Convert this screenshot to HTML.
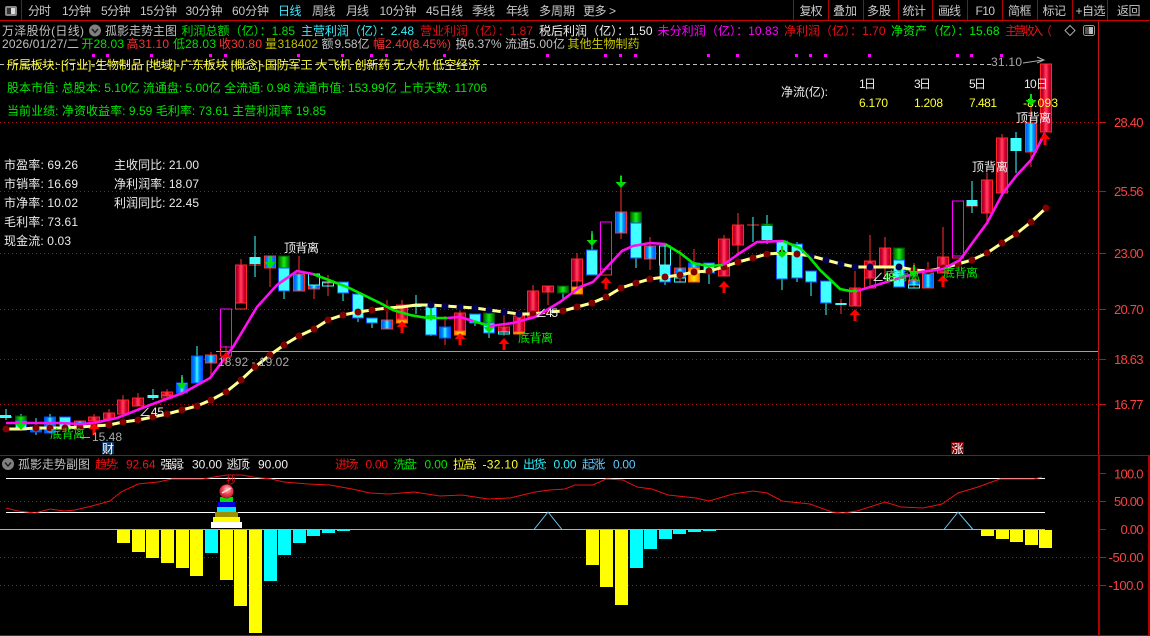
<!DOCTYPE html>
<html><head><meta charset="utf-8"><title>万泽股份</title>
<style>
html,body{margin:0;padding:0;background:#000;width:1150px;height:636px;overflow:hidden}
svg{display:block;position:absolute;left:0;top:0}
text{font-family:"Liberation Sans","WenQuanYi Zen Hei","Noto Sans CJK SC",sans-serif;font-size:12px;white-space:pre}
.cs{shape-rendering:crispEdges}
g.k rect{width:11px}
.r{fill:url(#gr);stroke:#ff2828}
.h{fill:none;stroke:#ff3030}
.m{fill:none;stroke:#ff00ff}
.bb{fill:url(#gb);stroke:#0050ff}
.b{fill:url(#gb);stroke:#ff3030}
.c{fill:#40ffff;stroke:#1050ff}
.cy{fill:#40ffff}
.hc{fill:none;stroke:#40ffff}
.g{fill:url(#gg);stroke:#005000}
.o{fill:url(#go);stroke:#ff6000}
.grid{stroke:#b01010;stroke-dasharray:1 3;fill:none}
.tb{fill:#c8c8c8}
.ax{fill:#ff4040}
.ax text{font-size:13px}
</style></head><body>
<svg width="1150" height="636" viewBox="0 0 1150 636" xmlns="http://www.w3.org/2000/svg">
<defs>
<linearGradient id="gr"><stop offset="0" stop-color="#900020"/><stop offset=".25" stop-color="#d80030"/><stop offset=".45" stop-color="#ff3858"/><stop offset=".55" stop-color="#ff3858"/><stop offset=".75" stop-color="#d80030"/><stop offset="1" stop-color="#900020"/></linearGradient>
<linearGradient id="gb"><stop offset="0" stop-color="#0050ff"/><stop offset=".3" stop-color="#0090ff"/><stop offset=".5" stop-color="#40f8ff"/><stop offset=".7" stop-color="#0090ff"/><stop offset="1" stop-color="#0050ff"/></linearGradient>
<linearGradient id="gg"><stop offset="0" stop-color="#006000"/><stop offset=".5" stop-color="#10f010"/><stop offset="1" stop-color="#006000"/></linearGradient>
<linearGradient id="go"><stop offset="0" stop-color="#ff8000"/><stop offset=".5" stop-color="#ffe000"/><stop offset="1" stop-color="#ff8000"/></linearGradient>
<radialGradient id="ball" cx=".55" cy=".35" r=".7"><stop offset="0" stop-color="#ffd0d0"/><stop offset=".5" stop-color="#f04050"/><stop offset="1" stop-color="#a01020"/></radialGradient>
<path id="au" d="M0 0L5.500 6H1.500V12H-1.500V6H-5.500Z" fill="#ff0000"/>
<path id="ad" d="M0 0L-5.500-6H-1V-12H1V-6H5.500Z" fill="#00e000"/>
</defs>

<!-- frame -->
<g class="cs" fill="none">
<path d="M0 20.500H1150" stroke="#cc0000"/>
<path d="M21.500 0V20M793.500 0V20M828.500 0V20M863.500 0V20M898.500 0V20M932.500 0V20M967.500 0V20M1002.500 0V20M1037.500 0V20M1072.500 0V20M1107.500 0V20" stroke="#b00000"/>
<path d="M1098.500 20V455" stroke="#c01010"/>
<path d="M1099 455V636M1149 455V636" stroke="#b00000" stroke-width="2"/>
<path d="M0 455.500H1150M0 635.500H1150" stroke="#b00000"/>
</g>
<rect x="5" y="6" width="12" height="10" rx="2" fill="#888"/><rect x="11" y="8" width="4" height="6" fill="#ddd"/><rect x="7" y="8" width="4" height="6" fill="#333"/>

<!-- toolbar -->
<g class="tb">
<text x="28" y="15" textLength="23">分时</text>
<text x="62" y="15" textLength="29">1分钟</text>
<text x="101" y="15" textLength="29.500">5分钟</text>
<text x="140" y="15" textLength="37">15分钟</text>
<text x="185.500" y="15" textLength="37">30分钟</text>
<text x="232" y="15" textLength="37">60分钟</text>
<text x="278" y="15" textLength="23.500" fill="#40e8ff">日线</text>
<text x="312" y="15" textLength="23.500">周线</text>
<text x="346" y="15" textLength="23">月线</text>
<text x="379.500" y="15" textLength="37">10分钟</text>
<text x="426" y="15" textLength="37">45日线</text>
<text x="472" y="15" textLength="23">季线</text>
<text x="506" y="15" textLength="23">年线</text>
<text x="539" y="15" textLength="36">多周期</text>
<text x="583" y="15" textLength="33">更多 &gt;</text>
<text x="799.500" y="15" textLength="23">复权</text>
<text x="833" y="15" textLength="24">叠加</text>
<text x="867" y="15" textLength="24">多股</text>
<text x="902.500" y="15" textLength="23.500">统计</text>
<text x="938" y="15" textLength="23">画线</text>
<text x="975.500" y="15" textLength="19.500">F10</text>
<text x="1008" y="15" textLength="23.500">简框</text>
<text x="1042.500" y="15" textLength="23.500">标记</text>
<text x="1075.500" y="15" textLength="30">+自选</text>
<text x="1117" y="15" textLength="23.500">返回</text>
</g>

<!-- header line 2 -->
<text x="2" y="35" textLength="82" fill="#c0c0c0">万泽股份(日线)</text>
<circle cx="95" cy="30.500" r="6" fill="#808080"/><path d="M92 29L95 32.500 98 29" fill="none" stroke="#222" stroke-width="1.500"/>
<text x="105" y="35" textLength="72" fill="#c0c0c0">孤影走势主图</text>
<text x="181.500" y="35" textLength="113.500" fill="#00e000">利润总额（亿）：1.85</text>
<text x="301" y="35" textLength="113" fill="#30f0ff">主营利润（亿）：2.48</text>
<text x="420" y="35" textLength="113" fill="#e01010">营业利润（亿）：1.87</text>
<text x="539" y="35" textLength="113.500" fill="#f0f0f0">税后利润（亿）：1.50</text>
<text x="657.500" y="35" textLength="121" fill="#ff00ff">未分利润（亿）：10.83</text>
<text x="784" y="35" textLength="101.500" fill="#f01010">净利润（亿）：1.70</text>
<text x="891" y="35" textLength="108.500" fill="#00f000">净资产（亿）：15.68</text>
<text x="1005" y="35" textLength="47" fill="#f01010">主营收入（</text>
<path d="M1070 25.500L1075 30.500 1070 35.500 1065 30.500Z" fill="none" stroke="#aaa"/>
<rect x="1083.500" y="25.500" width="11" height="10" rx="2" fill="none" stroke="#999"/><rect x="1089" y="27" width="4" height="7" fill="#bbb"/><rect x="1085" y="27" width="4" height="7" fill="#555"/>

<!-- header line 3 -->
<text x="2" y="48" textLength="77" fill="#c0c0c0">2026/01/27/二</text>
<text x="81.500" y="48" textLength="10.500" fill="#00e000">开</text><text x="93.500" y="48" textLength="30.500" fill="#00e000">28.03</text>
<text x="126.500" y="48" textLength="10.500" fill="#ff3030">高</text><text x="138.500" y="48" textLength="30.500" fill="#ff3030">31.10</text>
<text x="173" y="48" textLength="10.500" fill="#00e000">低</text><text x="185" y="48" textLength="31" fill="#00e000">28.03</text>
<text x="219" y="48" textLength="10.500" fill="#ff3030">收</text><text x="231" y="48" textLength="31" fill="#ff3030">30.80</text>
<text x="265" y="48" textLength="10.500" fill="#c0c000">量</text><text x="277.500" y="48" textLength="40.500" fill="#c0c000">318402</text>
<text x="321.500" y="48" textLength="10.500" fill="#c0c0c0">额</text><text x="334.500" y="48" textLength="35" fill="#c0c0c0">9.58亿</text>
<text x="373" y="48" textLength="10.500" fill="#ff3030">幅</text><text x="385" y="48" textLength="66" fill="#ff3030">2.40(8.45%)</text>
<text x="455.500" y="48" textLength="10.500" fill="#c0c0c0">换</text><text x="467.500" y="48" textLength="34" fill="#c0c0c0">6.37%</text>
<text x="505" y="48" textLength="24" fill="#c0c0c0">流通</text><text x="529" y="48" textLength="36" fill="#c0c0c0">5.00亿</text>
<text x="567.500" y="48" textLength="72" fill="#c8c800">其他生物制药</text>

<!-- magenta dots -->
<g fill="#ff00ff" class="cs"><rect x="92" y="54" width="3" height="3"/><rect x="106" y="54" width="3" height="3"/><rect x="150" y="54" width="3" height="3"/><rect x="209" y="54" width="3" height="3"/><rect x="224" y="54" width="3" height="3"/><rect x="297" y="54" width="3" height="3"/><rect x="341" y="54" width="3" height="3"/><rect x="370" y="54" width="3" height="3"/><rect x="385" y="54" width="3" height="3"/><rect x="443" y="54" width="3" height="3"/><rect x="546" y="54" width="3" height="3"/><rect x="604" y="54" width="3" height="3"/><rect x="619" y="54" width="3" height="3"/><rect x="634" y="54" width="3" height="3"/><rect x="707" y="54" width="3" height="3"/><rect x="736" y="54" width="3" height="3"/><rect x="795" y="54" width="3" height="3"/><rect x="809" y="54" width="3" height="3"/><rect x="824" y="54" width="3" height="3"/><rect x="868" y="54" width="3" height="3"/><rect x="956" y="54" width="3" height="3"/><rect x="970" y="54" width="3" height="3"/><rect x="1000" y="54" width="3" height="3"/></g>

<!-- grid -->
<g class="cs">
<path class="grid" d="M0 122.500H1098M0 191.500H1098M0 253.500H1098M0 309.500H1098M0 359.500H1098M0 404.500H1098M0 501.500H1098M0 557.500H1098M0 585.500H1098"/>
<path d="M0 64.500H991" stroke="#c0c0c0" stroke-dasharray="4 3" fill="none"/>
<path d="M216 351.500H1098" stroke="#a0a0a0" fill="none"/>
</g>
<path d="M1023 63L1043 60M1037 57L1044 60 1037 63" fill="none" stroke="#aaa"/>

<!-- wicks -->
<g class="cs" fill="none" stroke="#ff3030">
<path d="M94 414V424M109 409V419M123 395V414M138 393V406M167 389V400M211 352V377M226 346V356M241 259V303M249 265H261M270 256V287M299 256V291M314 285V299M328 275V296M322 283H334M387 300V329M402 300V323M445 316V345M460 310V335M504 308V336M519 310V334M533 285V317M548 286V305M577 253V294M621 175V239M650 237V270M680 250V282M694 249V282M724 235V276M738 213V256M747 225H759M841 299V314M835 304H847M855 271V306M870 235V288M885 237V280M914 263V288M928 262V288M943 227V273M987 173V223M1002 134V196M1031 100V167M966 206H978"/>
</g>
<g class="cs" fill="none" stroke="#40ffff">
<path d="M6 409V420M0 417H12M21 414V430M36 418V435M30 429H42M50 414V433M153 389V400M182 375V393M197 346V383M255 236V277M284 256V299M343 282V301M358 294V322M372 318V328M416 295V314M431 307V336M475 314V326M489 323V338M563 286V301M557 292H569M592 231V275M636 223V268M665 246V285M709 263V284M767 215V244M782 241V290M797 242V282M811 271V296M826 281V315M899 248V287M972 181V213M1016 132V173M753 217V242"/>
</g>

<!-- candles -->
<g class="k cs">
<rect class="g" x="15.500" y="416" height="5"/><rect class="g" x="278.500" y="256" height="12"/><rect class="g" x="483.500" y="313" height="10"/><rect class="g" x="557.500" y="286" height="7"/><rect class="g" x="630.500" y="212" height="11"/><rect class="g" x="761.500" y="224" height="2"/><rect class="g" x="893.500" y="248" height="12"/>
<rect class="r" x="117.500" y="400" height="14"/><rect class="r" x="132.500" y="398" height="8"/><rect class="r" x="527.500" y="291" height="26"/><rect class="r" x="235.500" y="265" height="38"/><rect class="r" x="571.500" y="259" height="22"/><rect class="r" x="718.500" y="239" height="37"/><rect class="r" x="732.500" y="225" height="20"/><rect class="r" x="849.500" y="288" height="18"/><rect class="r" x="864.500" y="261" height="17"/><rect class="r" x="879.500" y="248" height="18"/><rect class="r" x="937.500" y="257" height="16"/><rect class="r" x="981.500" y="180" height="33"/><rect class="r" x="996.500" y="138" height="55"/><rect class="r" x="1040.500" y="64" height="68"/><rect class="r" x="454.500" y="313" height="18"/><rect class="r" x="396.500" y="305" height="14"/><rect class="r" x="513.500" y="316" height="16"/><rect class="r" x="103.500" y="413" height="6"/><rect class="r" x="88.500" y="417" height="4"/><rect class="r" x="161.500" y="392" height="3"/><rect class="r" x="542.500" y="286" height="6"/><rect class="r" x="498.500" y="327" height="5"/>
<rect class="h" x="161.500" y="396" height="2"/><rect class="h" x="220.500" y="347" height="9"/><rect class="h" x="235.500" y="303" height="6"/><rect class="h" x="571.500" y="281" height="6"/><rect class="h" x="600.500" y="269" height="6"/><rect class="h" x="864.500" y="278" height="10"/><rect class="h" x="952.500" y="256" height="2"/>
<rect class="m" x="220.500" y="309" height="38"/><rect class="m" x="600.500" y="222" height="47"/><rect class="m" x="952.500" y="201" height="55"/>
<rect class="bb" x="44.500" y="417" height="16"/><rect class="bb" x="176.500" y="383" height="10"/><rect class="bb" x="191.500" y="356" height="27"/><rect class="bb" x="30.500" y="427" height="5"/>
<rect class="b" x="74.500" y="421" height="6"/><rect class="b" x="205.500" y="355" height="8"/><rect class="b" x="264.500" y="256" height="12"/><rect class="b" x="293.500" y="274" height="17"/><rect class="b" x="381.500" y="320" height="9"/><rect class="bb" x="439.500" y="327" height="11"/><rect class="b" x="615.500" y="212" height="21"/><rect class="b" x="644.500" y="246" height="13"/><rect class="b" x="674.500" y="268" height="10"/><rect class="b" x="908.500" y="280" height="5"/><rect class="b" x="922.500" y="273" height="15"/><rect class="b" x="1025.500" y="123" height="29"/><rect class="b" x="308.500" y="285" height="4"/><rect class="bb" x="688.500" y="263" height="5"/>
<rect class="c" x="15.500" y="421" height="9"/><rect class="c" x="59.500" y="417" height="11"/><rect class="c" x="278.500" y="268" height="23"/><rect class="c" x="337.500" y="282" height="11"/><rect class="c" x="352.500" y="294" height="24"/><rect class="c" x="366.500" y="318" height="5"/><rect class="c" x="425.500" y="307" height="28"/><rect class="c" x="483.500" y="323" height="10"/><rect class="c" x="586.500" y="250" height="25"/><rect class="c" x="630.500" y="223" height="35"/><rect class="c" x="659.500" y="265" height="17"/><rect class="c" x="776.500" y="241" height="38"/><rect class="c" x="791.500" y="244" height="34"/><rect class="c" x="805.500" y="271" height="11"/><rect class="c" x="820.500" y="281" height="22"/><rect class="c" x="893.500" y="260" height="27"/><rect class="c" x="703.500" y="263" height="10"/><rect class="c" x="469.500" y="314" height="9"/>
<rect class="cy" x="0" y="415" height="3"/><rect class="cy" x="147.500" y="395" height="3"/><rect class="cy" x="249.500" y="257" height="7"/><rect class="cy" x="410.500" y="305" height="2"/><rect class="cy" x="761.500" y="226" height="14"/><rect class="cy" x="966.500" y="200" height="6"/><rect class="cy" x="1010.500" y="138" height="13"/><rect class="cy" x="835.500" y="303" height="2"/>
<rect class="hc" x="308.500" y="274" height="11"/><rect class="hc" x="322.500" y="282" height="4"/><rect class="hc" x="498.500" y="332" height="2"/><rect class="hc" x="659.500" y="246" height="19"/><rect class="hc" x="674.500" y="278" height="4"/><rect class="hc" x="908.500" y="285" height="3"/>
<rect class="o" x="396.500" y="320" height="3"/><rect class="o" x="454.500" y="331" height="4"/><rect class="o" x="513.500" y="332" height="2"/><rect class="o" x="571.500" y="287" height="7"/><rect class="o" x="688.500" y="268" height="14"/>
</g>

<!-- yellow MA -->
<polyline fill="none" stroke="#ffff90" stroke-width="3" points="6,429 21,429 36,428 50,428 65,428 80,427 94,426 109,425 123,422 138,420 153,417 167,414 182,410 197,406 211,400 226,392 241,380 255,367 270,355 284,345 299,336 314,329 328,320 343,315 358,312 372,310 387,308 402,307 416,305 431,305 445,306 460,307 475,308 489,310 504,312 519,314 533,314 548,312 563,311 577,307 592,303 606,297 621,288 636,283 650,279 665,277 680,275 694,272 709,271 724,267 738,262 753,258 767,254 782,253 797,254 811,256 826,260 841,264 855,267 870,267 885,267 899,267 914,270 928,271 943,268 958,264 972,260 987,253 1002,243 1016,234 1031,222 1046,208"/>
<g fill="#800000">
<circle cx="6" cy="429" r="3.500"/><circle cx="36" cy="428" r="3.500"/><circle cx="50" cy="428" r="3.500"/><circle cx="65" cy="428" r="3.500"/><circle cx="80" cy="427" r="3.500"/><circle cx="94" cy="426" r="3.500"/><circle cx="109" cy="425" r="3.500"/><circle cx="123" cy="422" r="3.500"/><circle cx="138" cy="420" r="3.500"/><circle cx="153" cy="417" r="3.500"/><circle cx="167" cy="414" r="3.500"/><circle cx="182" cy="410" r="3.500"/><circle cx="197" cy="406" r="3.500"/><circle cx="211" cy="400" r="3.500"/><circle cx="226" cy="392" r="3.500"/><circle cx="241" cy="380" r="3.500"/><circle cx="255" cy="367" r="3.500"/><circle cx="270" cy="355" r="3.500"/><circle cx="284" cy="345" r="3.500"/><circle cx="299" cy="336" r="3.500"/><circle cx="314" cy="329" r="3.500"/><circle cx="328" cy="320" r="3.500"/><circle cx="343" cy="315" r="3.500"/><circle cx="358" cy="312" r="3.500"/><circle cx="372" cy="310" r="3.500"/><circle cx="387" cy="308" r="3.500"/>
<circle cx="533" cy="314" r="3.500"/><circle cx="548" cy="312" r="3.500"/><circle cx="563" cy="311" r="3.500"/><circle cx="577" cy="307" r="3.500"/><circle cx="592" cy="303" r="3.500"/><circle cx="606" cy="297" r="3.500"/><circle cx="621" cy="288" r="3.500"/><circle cx="636" cy="283" r="3.500"/><circle cx="650" cy="279" r="3.500"/><circle cx="665" cy="277" r="3.500"/><circle cx="680" cy="275" r="3.500"/><circle cx="694" cy="272" r="3.500"/><circle cx="709" cy="271" r="3.500"/><circle cx="724" cy="267" r="3.500"/><circle cx="738" cy="262" r="3.500"/><circle cx="753" cy="258" r="3.500"/><circle cx="767" cy="254" r="3.500"/><circle cx="782" cy="253" r="3.500"/><circle cx="797" cy="254" r="3.500"/>
<circle cx="914" cy="270" r="3.500"/><circle cx="928" cy="271" r="3.500"/><circle cx="943" cy="268" r="3.500"/><circle cx="958" cy="264" r="3.500"/><circle cx="972" cy="260" r="3.500"/><circle cx="987" cy="253" r="3.500"/><circle cx="1002" cy="243" r="3.500"/><circle cx="1016" cy="234" r="3.500"/><circle cx="1031" cy="222" r="3.500"/><circle cx="1046" cy="208" r="3.500"/>
</g>
<g fill="#000050">
<circle cx="431" cy="305" r="3.500"/><circle cx="445" cy="306" r="3.500"/><circle cx="460" cy="307" r="3.500"/><circle cx="475" cy="308" r="3.500"/><circle cx="489" cy="310" r="3.500"/><circle cx="504" cy="312" r="3.500"/><circle cx="519" cy="314" r="3.500"/>
<circle cx="811" cy="256" r="3.500"/><circle cx="826" cy="260" r="3.500"/><circle cx="841" cy="264" r="3.500"/><circle cx="855" cy="267" r="3.500"/><circle cx="870" cy="267" r="3.500"/><circle cx="899" cy="267" r="3.500"/>
</g>

<!-- magenta/green MA -->
<g fill="none" stroke-width="2.600">
<polyline stroke="#ff10f0" points="6,423 60,423 80,424 94,423 117,418 150,405 183,393 210,378 233,347 257,307 277,285 297,271 313,274"/>
<polyline stroke="#00e800" points="313,274 347,287 380,303 393,310 410,315 427,318 447,318"/>
<polyline stroke="#ff10f0" points="447,318 460,317 473,321"/>
<polyline stroke="#00e800" points="473,321 490,326"/>
<polyline stroke="#ff10f0" points="490,326 513,323 535,317 560,302 580,287 593,282 607,267 622,251 633,246 650,243 665,244"/>
<polyline stroke="#00e800" points="665,244 680,253 693,263 708,266 723,265"/>
<polyline stroke="#ff10f0" points="723,265 740,253 757,242 783,241"/>
<polyline stroke="#00e800" points="783,241 800,248 810,258 820,270 840,289 850,291 857,291"/>
<polyline stroke="#ff10f0" points="857,291 880,284 893,280 920,272 943,269 960,260 973,242 987,223 1003,193 1017,175 1031,160 1045,133"/>
</g>

<!-- arrows -->
<use href="#ad" x="21" y="430"/><use href="#ad" x="182" y="389"/><use href="#ad" x="270" y="268"/><use href="#ad" x="431" y="321"/><use href="#ad" x="489" y="333"/><use href="#ad" x="592" y="246"/><use href="#ad" x="621" y="188"/><use href="#ad" x="782" y="258"/><use href="#ad" x="914" y="277"/>
<use href="#au" x="94" y="423"/><use href="#au" x="226" y="352"/><use href="#au" x="402" y="321"/><use href="#au" x="460" y="333"/><use href="#au" x="504" y="338"/><use href="#au" x="606" y="277"/><use href="#au" x="724" y="281"/><use href="#au" x="855" y="309"/><use href="#au" x="943" y="275"/><use href="#au" x="1045" y="133"/>

<!-- info text -->
<text x="7" y="69" textLength="473" fill="#ffff30">所属板块: [行业]-生物制品 [地域]-广东板块 [概念]-国防军工 大飞机 创新药 无人机 低空经济</text>
<text x="7" y="92" textLength="480" fill="#00e800">股本市值: 总股本: 5.10亿 流通盘: 5.00亿 全流通: 0.98 流通市值: 153.99亿 上市天数: 11706</text>
<text x="7" y="115" textLength="319" fill="#00e800">当前业绩: 净资收益率: 9.59 毛利率: 73.61 主营利润率 19.85</text>
<g fill="#ececec">
<text x="4" y="169" textLength="74">市盈率: 69.26</text>
<text x="4" y="188" textLength="74">市销率: 16.69</text>
<text x="4" y="207" textLength="74">市净率: 10.02</text>
<text x="4" y="226" textLength="74">毛利率: 73.61</text>
<text x="4" y="245" textLength="67">现金流: 0.03</text>
<text x="114" y="169" textLength="85">主收同比: 21.00</text>
<text x="114" y="188" textLength="85">净利润率: 18.07</text>
<text x="114" y="207" textLength="85">利润同比: 22.45</text>
<text x="781" y="96" textLength="47">净流(亿):</text>
<text x="859" y="88" textLength="17">1日</text>
<text x="914" y="88" textLength="17">3日</text>
<text x="969" y="88" textLength="17">5日</text>
<text x="1024" y="88" textLength="24">10日</text>
</g>
<g fill="#ffff30">
<text x="859" y="107" textLength="29">6.170</text>
<text x="914" y="107" textLength="29">1.208</text>
<text x="969" y="107" textLength="28">7.481</text>
<text x="1023" y="107" textLength="35">-8.093</text>
</g>
<use href="#ad" x="1031" y="106"/>

<!-- chart labels -->
<g fill="#f0f0f0">
<text x="284" y="252" textLength="35">顶背离</text>
<text x="972" y="171" textLength="36">顶背离</text>
<text x="1016" y="122" textLength="35">顶背离</text>
<text x="139" y="416" textLength="25">∠45</text>
<text x="535" y="317" textLength="23">∠45</text>
<text x="872" y="281" textLength="23">∠48</text>
</g>
<g fill="#00e800">
<text x="50" y="438" textLength="35">底背离</text>
<text x="518" y="342" textLength="35">底背离</text>
<text x="885" y="280" textLength="35">底背离</text>
<text x="943" y="277" textLength="35">底背离</text>
</g>
<g fill="#aaaaaa">
<text x="92" y="441" textLength="30">15.48</text>
<text x="218" y="366" textLength="71">18.92 - 19.02</text>
<text x="991" y="66" textLength="31">31.10</text>
</g>
<path class="cs" d="M80 437.500H90" stroke="#aaa" fill="none"/>
<rect x="102" y="442" width="12" height="12" fill="#103a6a"/><text x="102" y="453" textLength="12" fill="#fff">财</text>
<rect x="951" y="442" width="13" height="12" fill="#800000"/><text x="951.500" y="453" textLength="12" fill="#fff">涨</text>

<!-- axis -->
<g class="cs" stroke="#c01010"><path d="M1098 122.500H1106M1098 191.500H1106M1098 253.500H1106M1098 309.500H1106M1098 359.500H1106M1098 404.500H1106M1100 473.500H1106M1100 501.500H1106M1100 529.500H1106M1100 557.500H1106M1100 585.500H1106"/></g>
<g class="ax">
<text x="1114" y="127" textLength="29.500">28.40</text>
<text x="1114" y="196" textLength="29.500">25.56</text>
<text x="1114" y="258" textLength="29.500">23.00</text>
<text x="1114" y="314" textLength="29.500">20.70</text>
<text x="1114" y="364" textLength="29.500">18.63</text>
<text x="1114" y="409" textLength="29.500">16.77</text>
<text x="1114" y="478.500" textLength="29.500">100.0</text>
<text x="1114" y="506" textLength="29.500">50.00</text>
<text x="1120.500" y="534" textLength="23">0.00</text>
<text x="1108.500" y="562" textLength="35">-50.00</text>
<text x="1108.500" y="590" textLength="35">-100.0</text>
</g>

<!-- sub header -->
<circle cx="8" cy="464" r="6" fill="#808080"/><path d="M5 462.500L8 466 11 462.500" fill="none" stroke="#222" stroke-width="1.500"/>
<text x="18" y="468.500" textLength="72" fill="#c0c0c0">孤影走势副图</text>
<text x="95" y="468.500" textLength="24" fill="#f01010">趋势:</text><text x="126" y="468.500" textLength="29.500" fill="#f01010">92.64</text>
<text x="160.500" y="468.500" textLength="24" fill="#f0f0f0">强弱:</text><text x="192" y="468.500" textLength="30" fill="#f0f0f0">30.00</text>
<text x="226.500" y="468.500" textLength="24" fill="#f0f0f0">逃顶:</text><text x="258" y="468.500" textLength="30" fill="#f0f0f0">90.00</text>
<text x="335" y="468.500" textLength="24" fill="#f01010">进场:</text><text x="365.500" y="468.500" textLength="22.500" fill="#f01010">0.00</text>
<text x="393.500" y="468.500" textLength="24" fill="#00e800">洗盘:</text><text x="424.500" y="468.500" textLength="23" fill="#00e800">0.00</text>
<text x="453" y="468.500" textLength="24" fill="#ffff30">拉高:</text><text x="482.500" y="468.500" textLength="35.500" fill="#ffff30">-32.10</text>
<text x="523" y="468.500" textLength="24" fill="#30f0ff">出货:</text><text x="553.500" y="468.500" textLength="23" fill="#30f0ff">0.00</text>
<text x="582" y="468.500" textLength="24" fill="#60c8ff">起涨:</text><text x="613" y="468.500" textLength="22.500" fill="#60c8ff">0.00</text>

<!-- sub chart -->
<g class="cs">
<g fill="#ffff00">
<rect x="117" y="530" width="13" height="13"/><rect x="132" y="530" width="13" height="22"/><rect x="146" y="530" width="13" height="28"/><rect x="161" y="530" width="13" height="33"/><rect x="176" y="530" width="13" height="38"/><rect x="190" y="530" width="13" height="46"/><rect x="220" y="530" width="13" height="50"/><rect x="234" y="530" width="13" height="76"/><rect x="249" y="530" width="13" height="103"/>
<rect x="586" y="530" width="13" height="35"/><rect x="600" y="530" width="13" height="57"/><rect x="615" y="530" width="13" height="75"/>
<rect x="981" y="530" width="13" height="6"/><rect x="996" y="530" width="13" height="9"/><rect x="1010" y="530" width="13" height="12"/><rect x="1025" y="530" width="13" height="15"/><rect x="1039" y="530" width="13" height="18"/>
</g>
<g fill="#00ffff">
<rect x="205" y="530" width="13" height="23"/><rect x="264" y="530" width="13" height="51"/><rect x="278" y="530" width="13" height="25"/><rect x="293" y="530" width="13" height="13"/><rect x="307" y="530" width="13" height="6"/><rect x="322" y="530" width="13" height="3"/><rect x="337" y="530" width="13" height="1"/>
<rect x="630" y="530" width="13" height="38"/><rect x="644" y="530" width="13" height="19"/><rect x="659" y="530" width="13" height="9"/><rect x="673" y="530" width="13" height="4"/><rect x="688" y="530" width="13" height="2"/><rect x="703" y="530" width="13" height="1"/>
</g>
<path d="M6 478.500H1045M6 512.500H1045" stroke="#ffffff" fill="none"/>
<path d="M0 529.500H1045" stroke="#70c8f0" fill="none"/>
</g>
<polyline fill="none" stroke="#e81010" points="6,508 18,511 35,513 50,509 64,511 75,510 92,506 110,501 121,492 138,484 158,482 172,479 203,479 214,477 227,475 242,475 253,477 271,479 284,482 308,484 330,485 352,489 370,493 389,494 414,492 440,496 462,495 488,499 510,498 535,492 550,490 565,489 575,485 593,485 606,479 623,480 637,487 652,489 668,495 696,498 709,501 733,494 753,491 767,493 782,501 810,504 832,512 843,513 857,511 885,502 901,507 923,508 942,504 958,493 978,487 1000,479 1034,479 1042,477"/>
<path d="M534 529.500L548 512 562 529.500M944 529.500L958 512 973 529.500" fill="none" stroke="#70c8f0"/>
<g class="cs">
<rect x="211" y="522" width="31" height="6" fill="#ffffff"/>
<rect x="213" y="517" width="27" height="5" fill="#ffff00"/>
<rect x="215" y="512" width="23" height="5" fill="#a09000"/>
<rect x="217" y="507" width="19" height="5" fill="#00e8ff"/>
<rect x="218" y="502" width="17" height="5" fill="#0000e0"/>
<rect x="220" y="497" width="13" height="5" fill="#00e000"/>
</g>
<circle cx="226.500" cy="491.500" r="7" fill="url(#ball)"/>
<path d="M222 493L231 488" stroke="#ffe0e0" stroke-width="1.500" fill="none"/>
<text x="226" y="484" style="font-size:10px" fill="#f01010">抄</text>
</svg>
</body></html>
